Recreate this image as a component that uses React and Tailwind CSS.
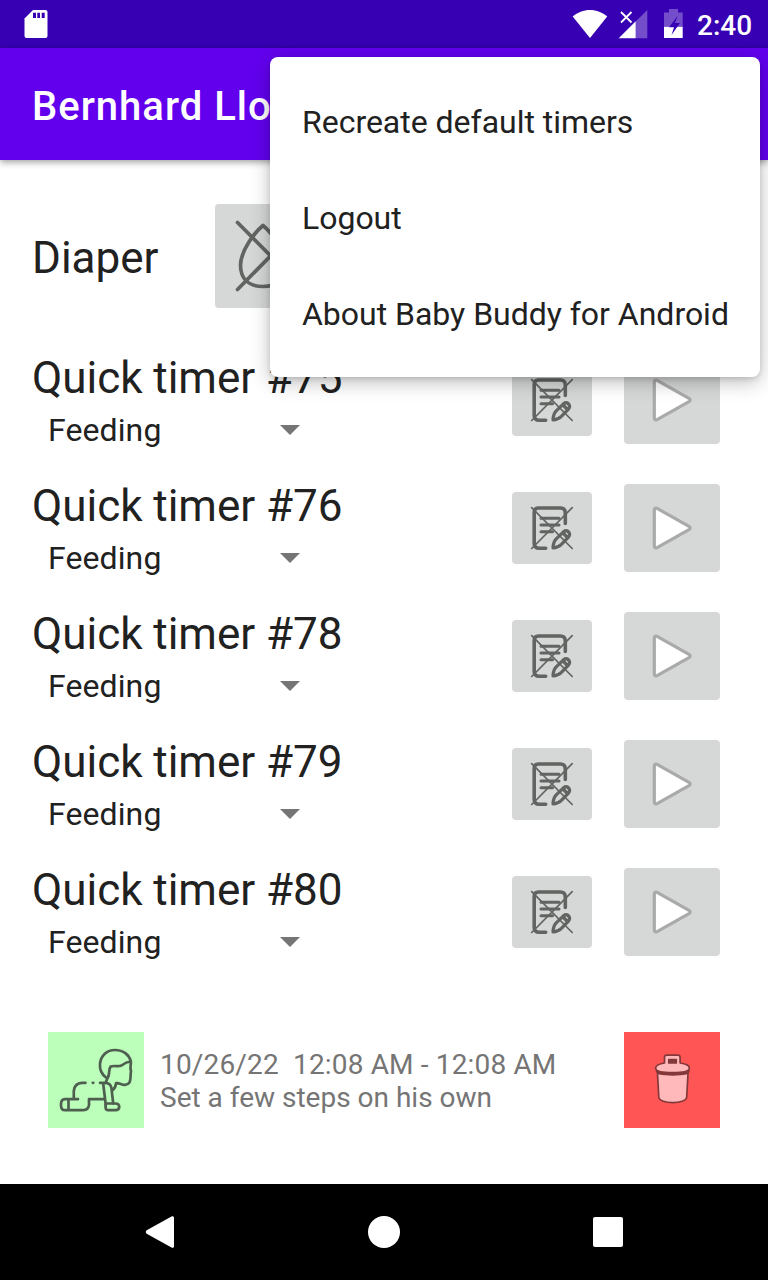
import React from "react";

const timers = [75, 76, 78, 79, 80];
const menuItems = ["Recreate default timers", "Logout", "About Baby Buddy for Android"];

function StatusBar() {
  return (
    <header className="flex h-12 shrink-0 items-center bg-[#3700b3] text-white">
      <svg className="ml-6 h-12 w-6" viewBox="0 0 24 48" fill="none">
        <path d="M9 10h12.500a2 2 0 0 1 2 2v24a2 2 0 0 1-2 2h-19a2 2 0 0 1-2-2V18.500z" fill="#fff" />
        <path d="M9 12.700h3v5.300H9zM13.300 12.700h2.700v5.300h-2.700zM17.700 12.700h3v5.300h-3z" fill="#3700b3" />
      </svg>
      <svg className="ml-auto h-12 w-[124px]" viewBox="0 0 124 48">
        <path d="M0.700 16.500C5.500 12.500 11.500 10 18 10s12.500 2.500 17.200 6.500L18 38z" fill="#fff" />
        <path d="M75.300 10v28.300H63.700V21.600z" fill="#fff" opacity=".3" />
        <path d="M46.700 38.300 63.700 21.300v17z" fill="#fff" />
        <path d="M49 12l10.500 10.500M59.500 12 49 22.500" stroke="#fff" strokeWidth="1.800" />
        <path d="M92 12.500h5V9h9v3.500h4.700v14.300H92z" fill="#fff" opacity=".3" />
        <path d="M92 26.800h18.700V38H92z" fill="#fff" />
        <path d="M105.500 16 97 27.200h5L99.500 35l8.500-12h-5z" fill="#3700b3" />
      </svg>
      <span className="mr-4 ml-[1px] w-[55px] pt-[3px] text-[28px] leading-none font-medium">2:40</span>
    </header>
  );
}

function DropIcon() {
  return (
    <svg className="h-[104px] w-[110px]" viewBox="0 0 110 104" fill="none" stroke="#626462" strokeWidth="3.700" strokeLinecap="round">
      <path d="M48 21.500C40 28 26 46 25.500 61C25.500 75 34 82.500 48 82.500S70.500 75 70.500 61C70 46 56 28 48 21.500z" strokeLinejoin="round" />
      <path d="m22.500 18.500 66 66.500m0-66.500L22.500 85.500" />
    </svg>
  );
}

function NoteIcon() {
  return (
    <svg className="h-[72px] w-20" viewBox="0 0 80 72" fill="none" stroke="#626462" strokeWidth="3.600" strokeLinecap="round" strokeLinejoin="round">
      <path d="M53.300 31.500V21q0-5-5-5H26.500q-4.300 0-4.300 4.500v31q0 4.800 5 4.800h6.500" />
      <path d="M29 26.300h18M29 33h18M29 39.700h11.500" strokeWidth="3" />
      <path d="M41 56q.2-6 3.200-9.200l7.500-7.200q2.500-1.800 4.800.2 2.100 2.600.2 5l-7.300 7.600q-3.400 3.300-8.400 3.600zM51.500 41.500l3.500 3.500" strokeWidth="3.200" />
      <path d="M19.700 15.700 60.200 56.500M60.200 15.700 19.700 56.500" strokeWidth="1.700" />
    </svg>
  );
}

function PlayIcon() {
  return (
    <svg className="h-[88px] w-24" viewBox="0 0 96 88">
      <path d="M30.300 26c0-1.800 1.300-2.400 2.800-1.600L65 42.400c1.600 1 1.600 2.300 0 3.200L33.100 63.600c-1.500.8-2.800.2-2.800-1.600z" fill="#fff" stroke="#a9aaa9" strokeWidth="3.200" />
    </svg>
  );
}

function TimerRow({ number }) {
  return (
    <li className="flex h-32 items-center">
      <div className="flex w-[480px] flex-col pt-2">
        <h2 className="text-[44px] leading-[52px] tracking-[-0.03px] whitespace-nowrap">Quick timer #{number}</h2>
        <div className="flex h-[52px] w-[272px] items-center justify-between pl-4 text-[32px] tracking-[0.1px]">
          <span>Feeding</span>
          <svg className="mr-1 h-[10px] w-5" viewBox="0 0 20 10">
            <path d="M0 0h20L10 10z" fill="#757575" />
          </svg>
        </div>
      </div>
      <button className="h-[72px] w-20 rounded-[4px] bg-[#d6d7d7]"><NoteIcon /></button>
      <button className="ml-8 h-[88px] w-24 rounded-[4px] bg-[#d6d7d7]"><PlayIcon /></button>
    </li>
  );
}

function CrawlIcon() {
  return (
    <svg className="size-24" viewBox="0 0 96 96" fill="none" stroke="#4f5f4f" strokeWidth="2.700" strokeLinecap="round" strokeLinejoin="round">
      <path d="M58 45.500C53.500 42 51.500 37.500 52 32 52.800 23.500 59 18 67 18c8.500 0 14.500 5 15.800 11.500-4 .3-6.500 1.800-9.300 4-3.500 1.500-7.500-.3-10.800 1-2.300 2.500-.9 6.500-2.300 9.500" />
      <path d="M82.800 29.500c.5 3-1.300 6 .2 9.500-.8 4 .2 8-1.500 11.500-2 2.800-6.500 3.200-9.500 1.200-1.300-.6-2.500-.7-4-.5q0 4-3.500 7" />
      <path d="M60.500 44 57.500 50.800" />
      <path d="M37.500 50.800H34q-7.500.5-8.200 8v8.400M44.800 50.800h.5M52 50.800h6q4.800.5 5.500 5.500l1.700 15M55.300 52.500l2.500 20.500M30 67.200H17q-4 .2-4 5v1q0 5 4 5h18.500q4.500-.2 5.500-5v-6h15M20.500 68v10" />
      <path d="M58.300 71.500h9.200c5 0 5 6.700 0 6.700h-7.700q-2.200-.3-2.200-2.700v-3z" />
    </svg>
  );
}

function TrashIcon() {
  return (
    <svg className="size-24" viewBox="0 0 96 96" fill="#ffb9ba" stroke="#84383a" strokeWidth="1.700" strokeLinejoin="round">
      <path d="M33.500 41.500 34.800 65c.4 7.500 27.400 7.500 27.900 0L64 41.500z" />
      <path d="M32.500 39q0 3.800 16.300 3.800T65.100 39z" fill="#84383a" />
      <path d="M40.500 31v-5.500q0-2.300 2.300-2.300h11q2.300 0 2.300 2.300V31c6 1 9.300 2 9.300 5 0 3.500-7 4.700-16.700 4.700S31.600 39.500 31.600 36c0-3 3.500-4 8.900-5z" />
      <path d="M44.800 27.600h7.500V31h-7.500z" fill="#84383a" />
    </svg>
  );
}

function NavigationBar() {
  return (
    <nav className="flex h-24 shrink-0 items-center justify-between bg-black px-[144px]">
      <svg className="size-8" viewBox="0 0 32 32"><path d="M2.700 14.300 27.500.4c1.200-.6 2.500 0 2.500 1.400v28.400c0 1.400-1.300 2-2.500 1.400L2.700 17.700c-1.100-.8-1.100-2.600 0-3.400z" fill="#fff" /></svg>
      <div className="size-8 rounded-full bg-white" />
      <div className="flex size-8 items-center justify-center"><div className="size-[30px] rounded-[2px] bg-white" /></div>
    </nav>
  );
}

function OptionsMenu() {
  return (
    <div className="absolute top-[57px] left-[270px] flex h-80 w-[490px] flex-col rounded-lg bg-white py-4 shadow-[0_5px_20px_rgba(0,0,0,0.26),0_2px_5px_rgba(0,0,0,0.12)]">
      {menuItems.map((item) => (
        <button key={item} className="flex h-24 items-center px-8 pt-[2px] text-left text-[32px] tracking-[-0.02px] whitespace-nowrap">{item}</button>
      ))}
    </div>
  );
}

export default function App() {
  return (
    <div className="relative flex h-[1280px] w-[768px] flex-col overflow-hidden bg-white font-['Roboto',sans-serif] text-[#212121]">
      <StatusBar />
      <div className="relative flex h-28 shrink-0 items-center bg-[#6200ee] px-8 shadow-[0_2px_7px_rgba(0,0,0,0.4)]">
        <h1 className="pt-[6px] text-[40px] font-medium tracking-[1px] whitespace-nowrap text-white">Bernhard Llo</h1>
      </div>
      <main className="flex grow flex-col">
        <section className="flex h-[176px] items-center px-8 pt-4">
          <h2 className="w-[183px] pt-1 text-[44px]">Diaper</h2>
          <button className="h-[104px] w-[110px] rounded-[4px] bg-[#d6d7d7]"><DropIcon /></button>
        </section>
        <ul className="flex flex-col px-8">
          {timers.map((number) => <TimerRow key={number} number={number} />)}
        </ul>
        <section className="mx-12 mt-14 flex h-24 items-center">
          <div className="size-24 bg-[#bbffbb]"><CrawlIcon /></div>
          <div className="ml-4 grow pt-[2px] text-[28px] leading-[33px] whitespace-pre text-[#757575]">
            <p className="tracking-[0.16px]">10/26/22  12:08 AM - 12:08 AM</p>
            <p>Set a few steps on his own</p>
          </div>
          <button className="size-24 bg-[#ff5555]"><TrashIcon /></button>
        </section>
      </main>
      <NavigationBar />
      <OptionsMenu />
    </div>
  );
}
